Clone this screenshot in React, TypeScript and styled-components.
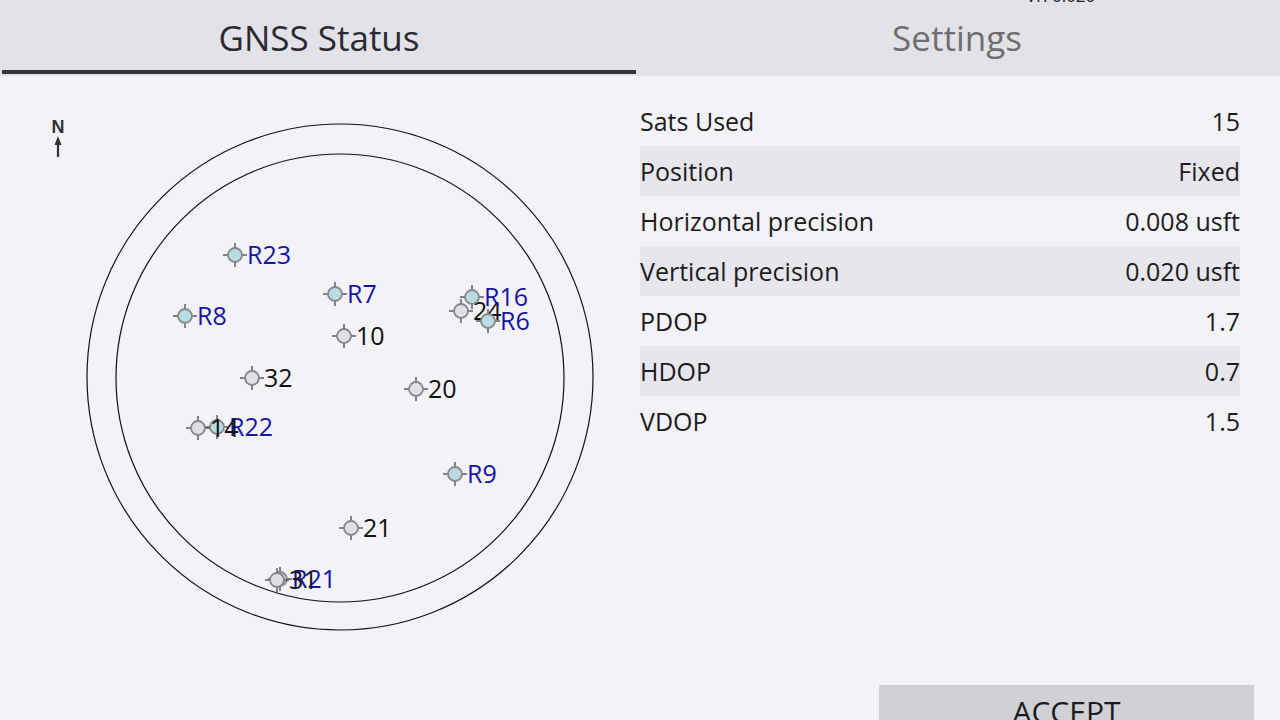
import * as React from "react";
import styled, { createGlobalStyle } from "styled-components";

const GlobalStyle = createGlobalStyle`
  html, body {
    margin: 0;
    padding: 0;
    background: #f2f2f7;
    font-family: "Open Sans", "Noto Sans", sans-serif;
    overflow: hidden;
  }
`;

const Page = styled.div`
  width: 1280px;
  height: 720px;
  display: flex;
  flex-direction: column;
  background: #f2f2f7;
  overflow: hidden;
  position: relative;
`;

const VersionTag = styled.div`
  position: absolute;
  top: -16px;
  left: 1026px;
  font-size: 17px;
  color: #222;
`;

const TabBar = styled.div`
  height: 76px;
  display: flex;
  background: #e3e2e8;
  padding: 0 2px;
  flex-shrink: 0;
`;

const Tab = styled.div<{ active?: boolean }>`
  width: 634px;
  box-sizing: border-box;
  display: flex;
  align-items: center;
  justify-content: center;
  font-size: 35px;
  padding-top: 4px;
  color: ${(p) => (p.active ? "#2a2a32" : "#6e6e70")};
  border-bottom: 4px solid ${(p) => (p.active ? "#333338" : "transparent")};
  margin-bottom: 2px;
  & + & {
    margin-left: 4px;
  }
`;

const Body = styled.div`
  flex: 1;
  display: grid;
  grid-template-columns: 640px 1fr;
`;

const PlotPanel = styled.div`
  position: relative;
`;

const InfoPanel = styled.div`
  padding: 20px 40px 0 0;
  display: flex;
  flex-direction: column;
  position: relative;
`;

const Row = styled.div<{ shaded?: boolean }>`
  height: 50px;
  display: flex;
  align-items: center;
  justify-content: space-between;
  font-size: 25px;
  color: #1c1c20;
  background: ${(p) => (p.shaded ? "#e7e6ec" : "transparent")};
`;

const AcceptButton = styled.button`
  position: absolute;
  left: 239px;
  top: 609px;
  width: 375px;
  height: 60px;
  border: none;
  background: #d0d0d6;
  font-family: "Open Sans", "Noto Sans", sans-serif;
  font-size: 30px;
  color: #1c1c20;
  padding: 0;
  display: flex;
  justify-content: center;
  padding-top: 6px;
`;

type Sat = { id: string; x: number; y: number; glonass?: boolean };

const sats: Sat[] = [
  { id: "R23", x: 235, y: 255, glonass: true },
  { id: "R7", x: 335, y: 294, glonass: true },
  { id: "R8", x: 185, y: 316, glonass: true },
  { id: "24", x: 461, y: 311 },
  { id: "R16", x: 472, y: 297, glonass: true },
  { id: "R6", x: 488, y: 321, glonass: true },
  { id: "10", x: 344, y: 336 },
  { id: "32", x: 252, y: 378 },
  { id: "20", x: 416, y: 389 },
  { id: "R22", x: 217, y: 427, glonass: true },
  { id: "14", x: 198, y: 428 },
  { id: "R9", x: 455, y: 474, glonass: true },
  { id: "21", x: 351, y: 528 },
  { id: "R21", x: 280, y: 579, glonass: true },
  { id: "31", x: 277, y: 580 },
];

const OFF = 76;

function SatMarker({ sat }: { sat: Sat }) {
  const cx = sat.x;
  const cy = sat.y - OFF;
  return (
    <g>
      <line x1={cx - 12} y1={cy} x2={cx + 12} y2={cy} stroke="#444" strokeWidth={1.3} />
      <line x1={cx} y1={cy - 12} x2={cx} y2={cy + 12} stroke="#444" strokeWidth={1.3} />
      <circle
        cx={cx}
        cy={cy}
        r={7}
        fill={sat.glonass ? "#b9dbe2" : "#e0e0e4"}
        stroke="#86868c"
        strokeWidth={1.8}
      />
      <text
        x={cx + 12}
        y={cy + 9}
        fontSize={25}
        fontFamily='"Open Sans", "Noto Sans", sans-serif'
        fill={sat.glonass ? "#1414a0" : "#111"}
      >
        {sat.id}
      </text>
    </g>
  );
}

function SkyPlot() {
  return (
    <svg width={640} height={644} viewBox="0 0 640 644">
      <text
        x={58}
        y={133 - OFF}
        fontSize={18}
        fontWeight={700}
        textAnchor="middle"
        fontFamily='"Liberation Sans", Arial, sans-serif'
        fill="#333"
      >
        N
      </text>
      <line x1={58} y1={141 - OFF} x2={58} y2={157 - OFF} stroke="#333" strokeWidth={2.2} />
      <path d={`M54.5 ${145 - OFF} L58 ${136 - OFF} L61.5 ${145 - OFF} Z`} fill="#333" />
      <circle cx={340} cy={377 - OFF} r={253} fill="none" stroke="#111" strokeWidth={1.2} />
      <circle cx={340} cy={378 - OFF} r={224} fill="none" stroke="#111" strokeWidth={1.2} />
      {sats.map((s) => (
        <SatMarker key={s.id} sat={s} />
      ))}
    </svg>
  );
}

const rows: [string, string][] = [
  ["Sats Used", "15"],
  ["Position", "Fixed"],
  ["Horizontal precision", "0.008 usft"],
  ["Vertical precision", "0.020 usft"],
  ["PDOP", "1.7"],
  ["HDOP", "0.7"],
  ["VDOP", "1.5"],
];

export default function App() {
  return (
    <Page>
      <GlobalStyle />
      <VersionTag>Vr. 0.020</VersionTag>
      <TabBar>
        <Tab active>GNSS Status</Tab>
        <Tab>Settings</Tab>
      </TabBar>
      <Body>
        <PlotPanel>
          <SkyPlot />
        </PlotPanel>
        <InfoPanel>
          {rows.map(([k, v], i) => (
            <Row key={k} shaded={i % 2 === 1}>
              <span>{k}</span>
              <span>{v}</span>
            </Row>
          ))}
          <AcceptButton>ACCEPT</AcceptButton>
        </InfoPanel>
      </Body>
    </Page>
  );
}
